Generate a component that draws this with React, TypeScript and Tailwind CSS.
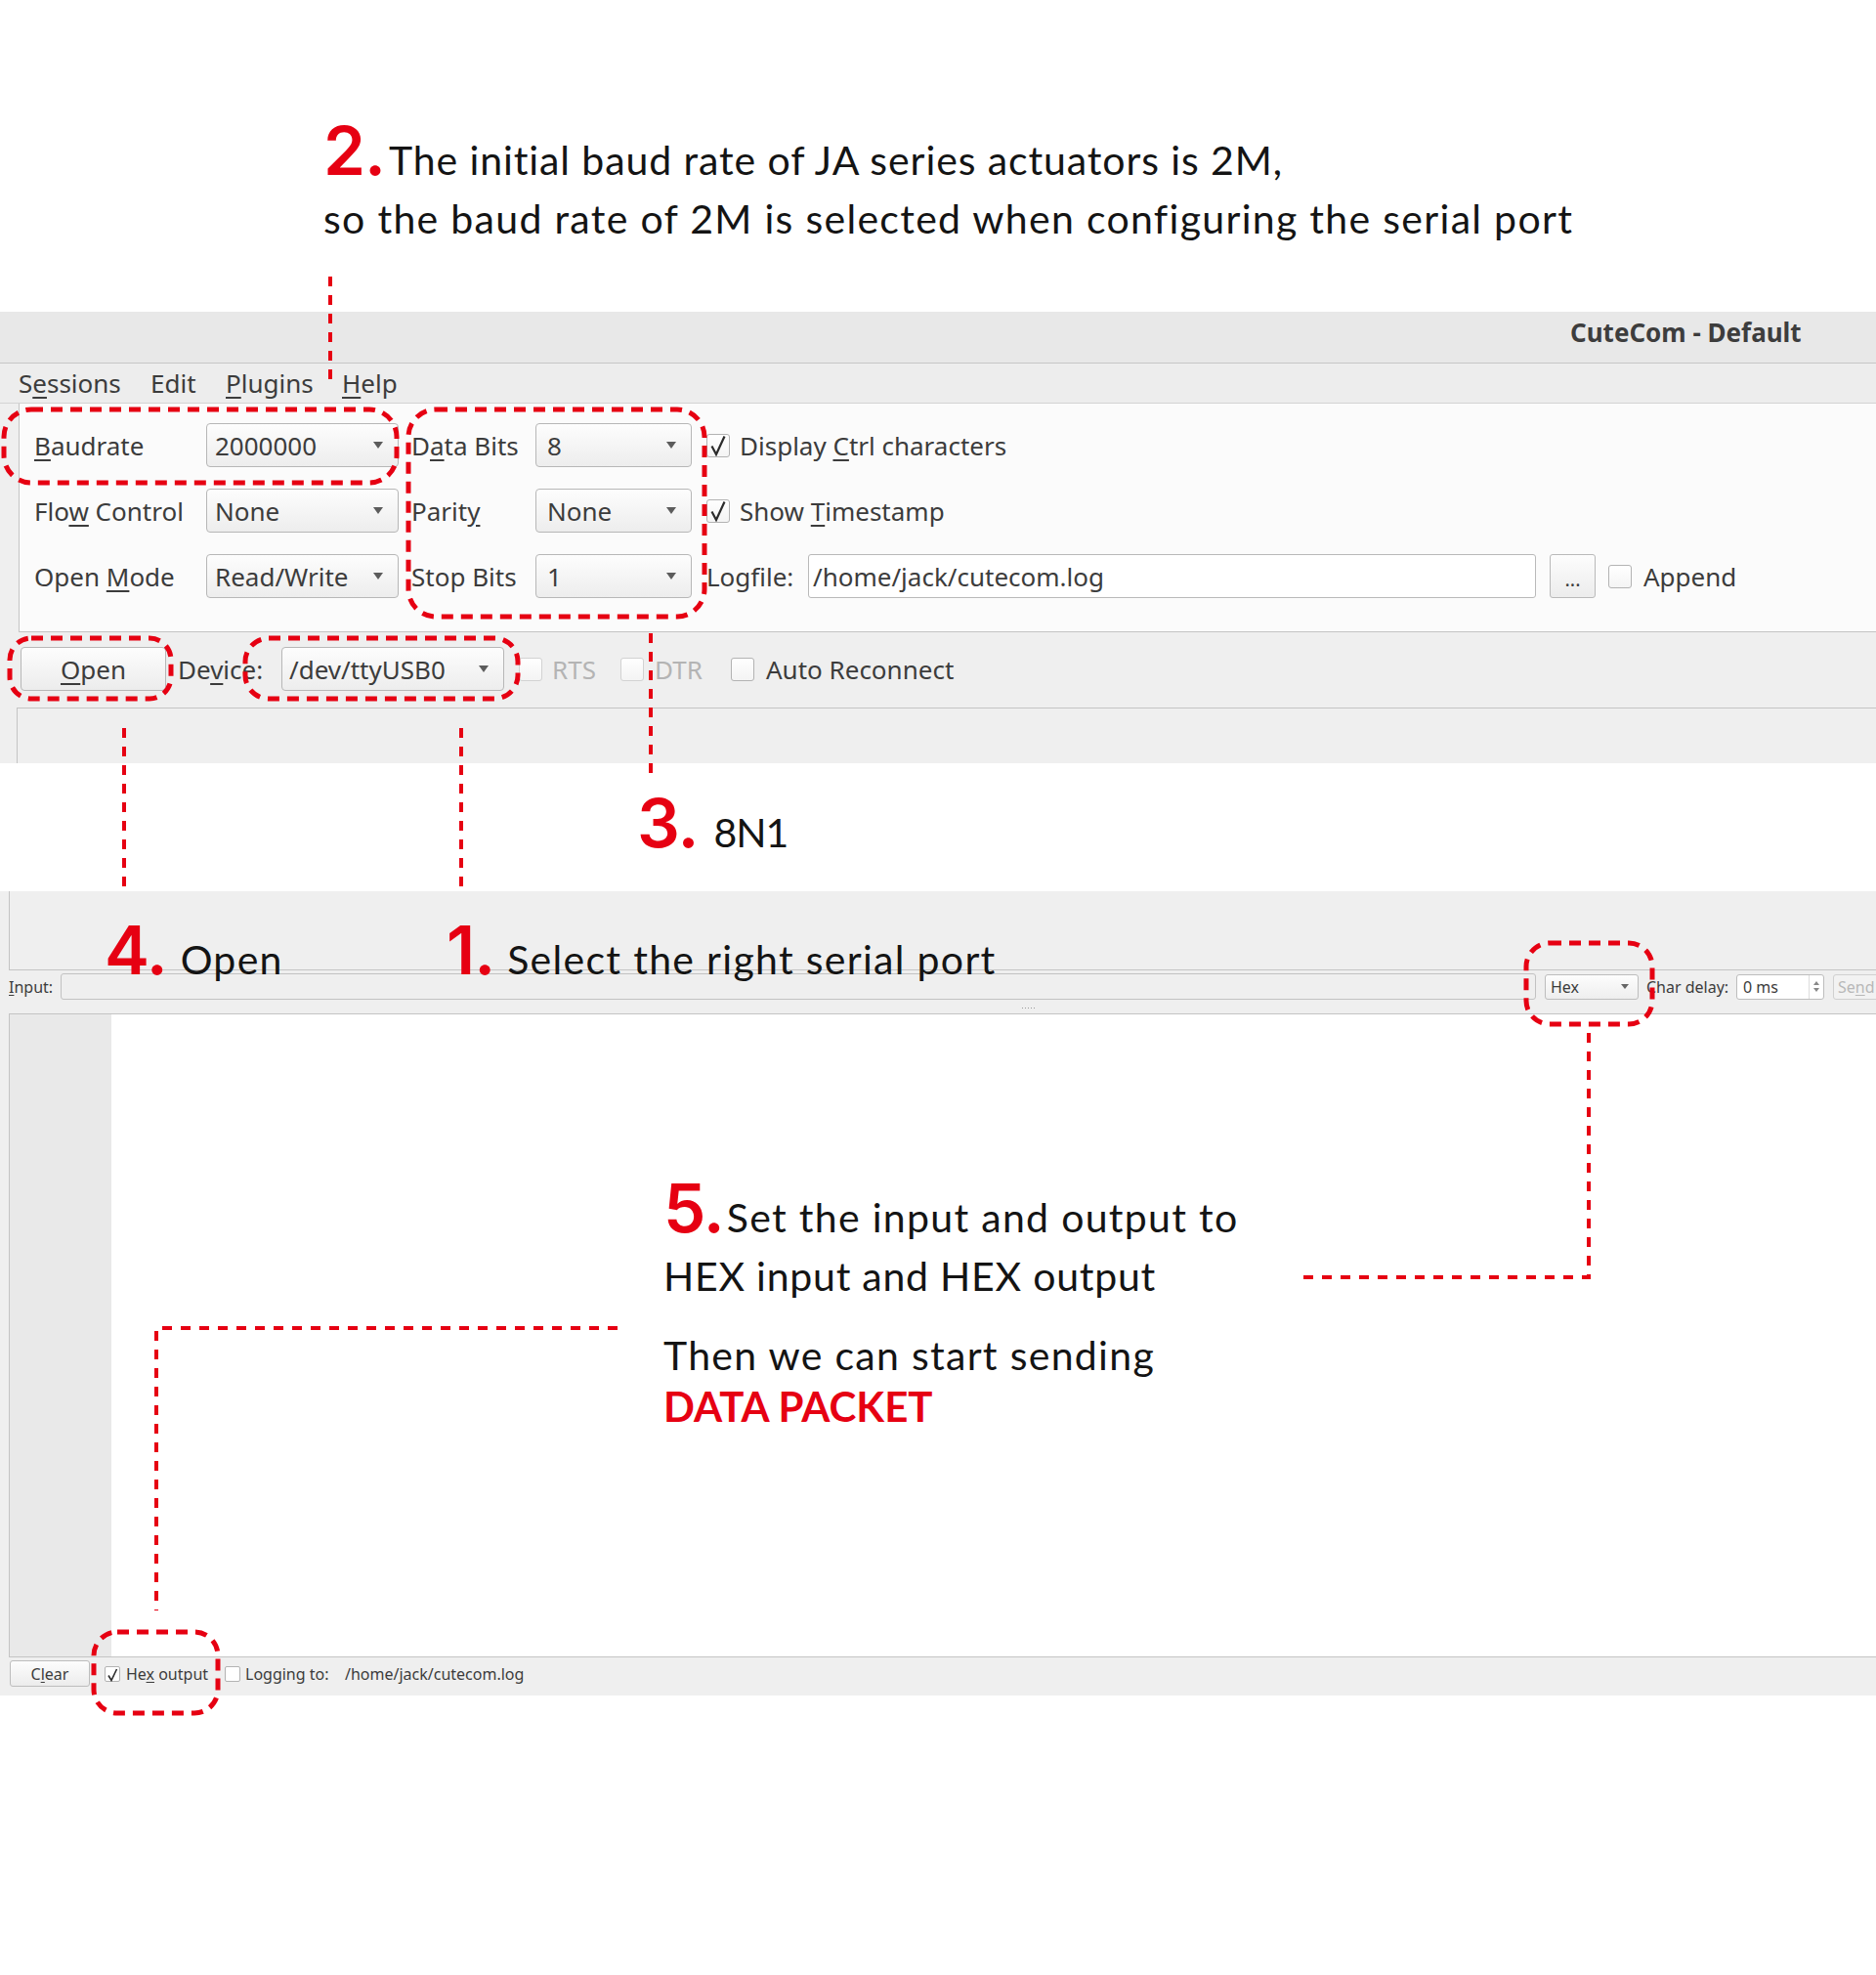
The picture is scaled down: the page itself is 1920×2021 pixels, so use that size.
import React from 'react';

const RED = '#e60012';

function Arrow({ small = false }: { small?: boolean }) {
  return small ? (
    <span className="h-0 w-0 border-l-[4px] border-r-[4px] border-t-[5px] border-l-transparent border-r-transparent border-t-[#666]" />
  ) : (
    <span className="h-0 w-0 border-l-[5px] border-r-[5px] border-t-[7px] border-l-transparent border-r-transparent border-t-[#5c5c5c]" />
  );
}

function Combo({ value, className }: { value: string; className: string }) {
  return (
    <div
      className={`flex h-[45px] shrink-0 items-center justify-between rounded-[4px] border border-[#b7b7b7] bg-linear-to-b from-[#fdfdfd] to-[#ededed] pr-[15px] ${className}`}
    >
      <span className="whitespace-nowrap">{value}</span>
      <Arrow />
    </div>
  );
}

function CheckMark({ big }: { big: boolean }) {
  return big ? (
    <svg width="18" height="22" viewBox="0 0 18 22" className="absolute left-[3px] top-[0px]">
      <path d="M1.5 11.5 L6 20 L14.5 1.5" stroke="#2b2b2b" strokeWidth="2.2" fill="none" />
    </svg>
  ) : (
    <svg width="12" height="14" viewBox="0 0 12 14" className="absolute left-[2px] top-[1px]">
      <path d="M1 7.5 L4 12.5 L9.5 1" stroke="#2b2b2b" strokeWidth="1.6" fill="none" />
    </svg>
  );
}

function BigBox({ checked = false, disabled = false }: { checked?: boolean; disabled?: boolean }) {
  return (
    <span
      className={`relative block h-[24px] w-[24px] shrink-0 rounded-[3px] border bg-linear-to-b from-white to-[#f4f4f4] ${
        disabled ? 'border-[#d2d2d2]' : 'border-[#b3b3b3]'
      }`}
    >
      {checked && <CheckMark big />}
    </span>
  );
}

function SmallBox({ checked = false }: { checked?: boolean }) {
  return (
    <span className="relative block h-[16px] w-[16px] shrink-0 rounded-[2px] border border-[#b3b3b3] bg-white">
      {checked && <CheckMark big={false} />}
    </span>
  );
}

function Num({ n }: { n: string }) {
  return (
    <span className="font-['Inter',sans-serif] text-[69px] font-semibold leading-none tracking-[-1px] text-[#e60012]">
      {n}.
    </span>
  );
}

// letter-spacing is set per line, the source font runs a little wider than Lato
const annot = "font-['Lato',sans-serif] text-[41px] leading-none text-[#141414] whitespace-nowrap";

function Dashes() {
  return (
    <svg
      className="pointer-events-none absolute left-0 top-0"
      width={1920}
      height={2021}
      viewBox="0 0 1920 2021"
      fill="none"
    >
      <g stroke={RED} strokeWidth={5} strokeDasharray="12 8">
        <rect x={4} y={419} width={402} height={75} rx={28} />
        <rect x={418} y={419} width={303} height={212} rx={28} />
        <rect x={10} y={653} width={165} height={62} rx={22} />
        <rect x={251} y={653} width={279} height={62} rx={24} />
        <rect x={1562} y={965} width={129} height={83} rx={24} />
        <rect x={96} y={1670} width={127} height={83} rx={24} />
      </g>
      <g stroke={RED} strokeWidth={4} strokeDasharray="10 9">
        <line x1={338} y1={283} x2={338} y2={393} />
        <line x1={127} y1={745} x2={127} y2={913} />
        <line x1={472} y1={745} x2={472} y2={913} />
        <line x1={666} y1={648} x2={666} y2={798} />
        <polyline points="1334,1307 1626,1307 1626,1052" />
        <polyline points="632,1359 160,1359 160,1648" />
      </g>
    </svg>
  );
}

function TopWindow() {
  return (
    <section className="bg-[#efefef] font-['Noto_Sans',sans-serif] text-[26px] leading-none text-[#3c3c3c]">
      <div className="flex h-[53px] items-center border-b border-[#c6c6c6] bg-[#e8e8e8] pb-[11px] pl-[1607px] font-bold text-[#3d3d3d]">
        CuteCom - Default
      </div>
      <div className="flex h-[41px] items-center border-b border-[#d3d3d3] bg-[#ededed] pl-[19px]">
        <span className="w-[135px]">
          S<u className="underline-offset-[4px]">e</u>ssions
        </span>
        <span className="w-[77px]">Edit</span>
        <span className="w-[119px]">
          <u className="underline-offset-[4px]">P</u>lugins
        </span>
        <span>
          <u className="underline-offset-[4px]">H</u>elp
        </span>
      </div>

      <div className="flex">
        <div className="w-[19px] shrink-0" />
        <div className="flex h-[234px] flex-1 flex-col gap-[22px] border-b border-l border-[#c4c4c4] bg-[#fbfbfb] pl-[15px] pt-[20px]">
          <div className="flex h-[45px] items-center">
            <span className="w-[176px] shrink-0">
              <u className="underline-offset-[4px]">B</u>audrate
            </span>
            <Combo value="2000000" className="w-[197px] pl-[8px]" />
            <span className="ml-[13px] w-[127px] shrink-0">
              D<u className="underline-offset-[4px]">a</u>ta Bits
            </span>
            <Combo value="8" className="w-[160px] pl-[11px]" />
            <span className="ml-[15px]">
              <BigBox checked />
            </span>
            <span className="ml-[10px]">
              Display <u className="underline-offset-[4px]">C</u>trl characters
            </span>
          </div>
          <div className="flex h-[45px] items-center">
            <span className="w-[176px] shrink-0">
              Flo<u className="underline-offset-[4px]">w</u> Control
            </span>
            <Combo value="None" className="w-[197px] pl-[8px]" />
            <span className="ml-[13px] w-[127px] shrink-0">
              Parit<u className="underline-offset-[4px]">y</u>
            </span>
            <Combo value="None" className="w-[160px] pl-[11px]" />
            <span className="ml-[15px]">
              <BigBox checked />
            </span>
            <span className="ml-[10px]">
              Show <u className="underline-offset-[4px]">T</u>imestamp
            </span>
          </div>
          <div className="flex h-[45px] items-center">
            <span className="w-[176px] shrink-0">
              Open <u className="underline-offset-[4px]">M</u>ode
            </span>
            <Combo value="Read/Write" className="w-[197px] pl-[8px]" />
            <span className="ml-[13px] w-[127px] shrink-0">Stop Bits</span>
            <Combo value="1" className="w-[160px] pl-[11px]" />
            <span className="ml-[15px] w-[104px] shrink-0">Logfile:</span>
            <div className="flex h-[45px] w-[745px] items-center rounded-[3px] border border-[#b9b9b9] bg-white pl-[4px]">
              /home/jack/cutecom.log
            </div>
            <div className="ml-[14px] flex h-[45px] w-[47px] items-center justify-center rounded-[3px] border border-[#b9b9b9] bg-linear-to-b from-[#fdfdfd] to-[#ececec] pt-[6px] text-[20px]">
              ...
            </div>
            <span className="ml-[13px]">
              <BigBox />
            </span>
            <span className="ml-[12px]">Append</span>
          </div>
        </div>
      </div>

      <div className="h-[77px] pl-[21px] pt-[15px]">
        <div className="flex h-[45px] items-center">
          <div className="flex h-[45px] w-[149px] shrink-0 items-center justify-center rounded-[4px] border border-[#b7b7b7] bg-linear-to-b from-[#fdfdfd] to-[#ececec]">
            <span>
              <u className="underline-offset-[4px]">O</u>pen
            </span>
          </div>
          <span className="ml-[12px] w-[106px] shrink-0">
            De<u className="underline-offset-[4px]">v</u>ice:
          </span>
          <Combo value="/dev/ttyUSB0" className="w-[228px] pl-[7px]" />
          <div className="ml-[15px] flex w-[104px] shrink-0 items-center text-[#b4b4b4]">
            <BigBox disabled />
            <span className="ml-[10px]">RTS</span>
          </div>
          <div className="flex w-[113px] shrink-0 items-center text-[#b4b4b4]">
            <BigBox disabled />
            <span className="ml-[11px]">DTR</span>
          </div>
          <BigBox />
          <span className="ml-[12px]">Auto Reconnect</span>
        </div>
      </div>
      <div className="ml-[17px] h-[57px] border-l border-t border-[#c4c4c4]" />
    </section>
  );
}

function BottomWindow() {
  return (
    <section className="bg-[#efefef] font-['Noto_Sans',sans-serif] text-[16px] leading-none text-[#3c3c3c]">
      <div className="ml-[9px] h-[81px] border-b border-l border-[#c4c4c4]" />
      <div className="flex h-[33px] items-center pl-[9px]">
        <span className="w-[53px] shrink-0">
          <u className="underline-offset-[2px]">I</u>nput:
        </span>
        <div className="h-[27px] w-[1510px] shrink-0 rounded-[3px] border border-[#c2c2c2] bg-[#efefef]" />
        <div className="ml-[9px] flex h-[26px] w-[96px] shrink-0 items-center justify-between rounded-[3px] border border-[#bdbdbd] bg-linear-to-b from-[#fdfdfd] to-[#eeeeee] pl-[5px] pr-[9px]">
          <span>Hex</span>
          <Arrow small />
        </div>
        <span className="ml-[8px] w-[92px] shrink-0">Char delay:</span>
        <div className="flex h-[26px] w-[90px] shrink-0 rounded-[3px] border border-[#bdbdbd] bg-white">
          <span className="flex flex-1 items-center pl-[6px]">0 ms</span>
          <div className="flex w-[15px] flex-col items-center justify-center gap-[3px] border-l border-[#dcdcdc]">
            <span className="h-0 w-0 border-b-[4px] border-l-[3px] border-r-[3px] border-b-[#888] border-l-transparent border-r-transparent" />
            <span className="h-0 w-0 border-l-[3px] border-r-[3px] border-t-[4px] border-l-transparent border-r-transparent border-t-[#888]" />
          </div>
        </div>
        <div className="ml-[9px] flex h-[26px] w-[80px] shrink-0 items-center rounded-[3px] border border-[#d0d0d0] bg-[#f2f2f2] pl-[4px] text-[#b8b8b8]">
          <span>
            Se<u className="underline-offset-[2px]">n</u>d
          </span>
        </div>
      </div>
      <div className="flex h-[11px] items-center gap-[2px] pl-[1046px]">
        {[0, 1, 2, 3, 4].map((i) => (
          <span key={i} className="h-[1px] w-[1px] bg-[#9a9a9a]" />
        ))}
      </div>
      <div className="ml-[9px] flex h-[659px] border-b border-l border-t border-[#c4c4c4] bg-white">
        <div className="w-[104px] shrink-0 bg-[#e9e9e9]" />
        <div className="flex-1" />
      </div>
      <div className="h-[39px] pl-[10px] pt-[3px]">
        <div className="flex h-[27px] items-center">
          <div className="flex h-[27px] w-[82px] shrink-0 items-center justify-center rounded-[3px] border border-[#bdbdbd] bg-linear-to-b from-[#fdfdfd] to-[#ececec]">
            <span>
              C<u className="underline-offset-[2px]">l</u>ear
            </span>
          </div>
          <span className="ml-[15px]">
            <SmallBox checked />
          </span>
          <span className="ml-[6px] w-[101px] shrink-0">
            He<u className="underline-offset-[2px]">x</u> output
          </span>
          <SmallBox />
          <span className="ml-[5px] w-[102px] shrink-0">Logging to:</span>
          <span>/home/jack/cutecom.log</span>
        </div>
      </div>
    </section>
  );
}

export default function App() {
  return (
    <div className="relative h-[2021px] w-[1920px] overflow-hidden bg-white">
      <div className="h-[319px] pl-[331px] pt-[120px]">
        <div className="flex items-baseline">
          <Num n="2" />
          <span className={`${annot} ml-[4px] tracking-[0.9px]`}>The initial baud rate of JA series actuators is 2M,</span>
        </div>
        <div className={`${annot} mt-[14px] tracking-[1.3px]`}>so the baud rate of 2M is selected when configuring the serial port</div>
      </div>

      <TopWindow />

      <div className="h-[131px] pl-[652px] pt-[27px]">
        <div className="flex items-baseline">
          <Num n="3" />
          <span className={`${annot} ml-[16px] tracking-[-1px]`}>8N1</span>
        </div>
      </div>

      <BottomWindow />

      <Dashes />

      <div className="absolute left-[107px] top-[938px] flex items-baseline">
        <Num n="4" />
        <span className={`${annot} ml-[14px] tracking-[1.3px]`}>Open</span>
      </div>
      <div className="absolute left-[457px] top-[938px] flex items-baseline">
        <Num n="1" />
        <span className={`${annot} ml-[13px] tracking-[1.3px]`}>Select the right serial port</span>
      </div>

      <div className="absolute left-[679px] top-[1202px]">
        <div className="flex items-baseline">
          <Num n="5" />
          <span className={`${annot} ml-[3px] tracking-[1.3px]`}>Set the input and output to</span>
        </div>
        <div className={`${annot} mt-[14px] tracking-[0.75px]`}>HEX input and HEX output</div>
        <div className={`${annot} mt-[40px] tracking-[1.3px]`}>Then we can start sending</div>
        <div className="mt-[11px] font-['Lato',sans-serif] text-[42px] font-bold leading-none text-[#e60012]">
          DATA PACKET
        </div>
      </div>
    </div>
  );
}
